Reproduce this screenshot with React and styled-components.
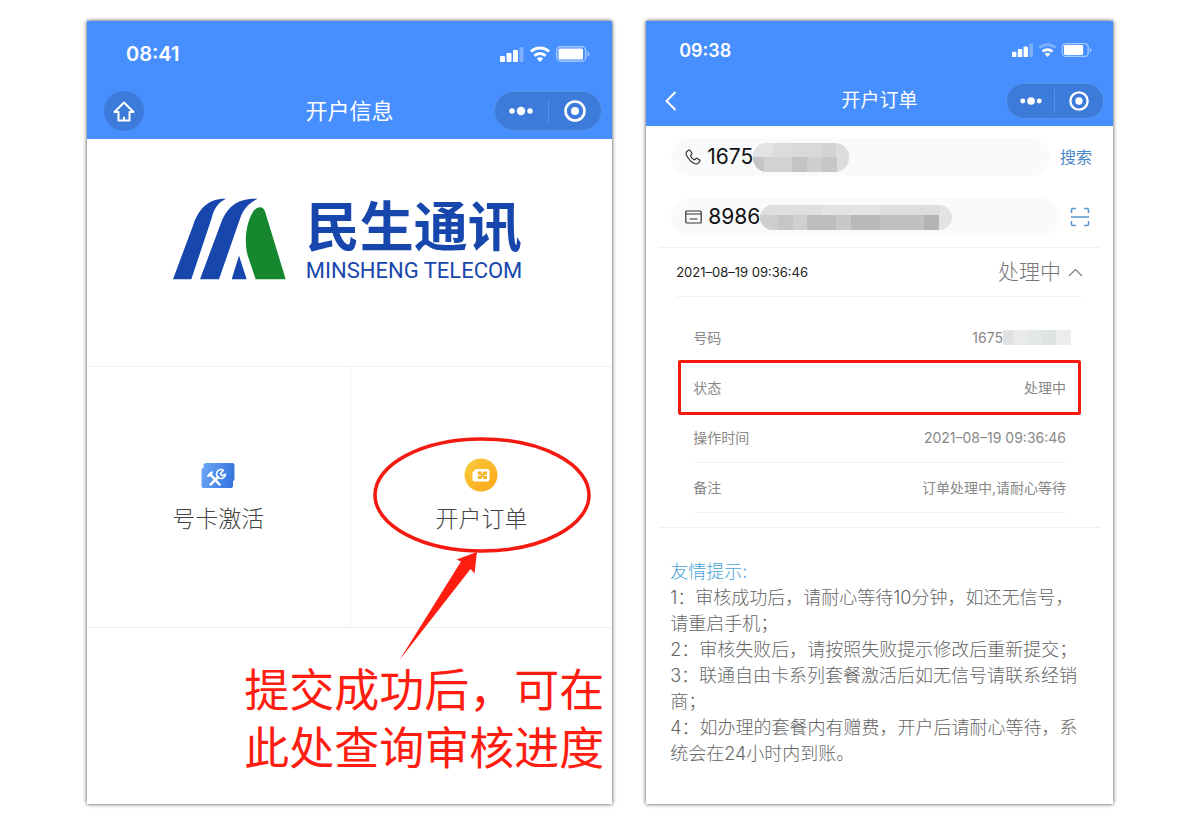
import React from "react";
import styled, { createGlobalStyle, css } from "styled-components";

const App = () => {
  return (
    <React.Fragment>
      <GlobalStyle />
      <Page>
        <Phone>
          <Header>
            <StatusBar time="08:41" fullWifi />
            <NavBar>
              <HomeButton type="button" aria-label="首页">
                <HomeIcon />
              </HomeButton>
              <Title $size="22px">开户信息</Title>
              <Capsule />
            </NavBar>
          </Header>
          <Brand>
            <BrandMark />
            <BrandText>
              <BrandName>民生通讯</BrandName>
              <BrandLatin>MINSHENG TELECOM</BrandLatin>
            </BrandText>
          </Brand>
          <Tiles>
            <Tile href="#activate">
              <ToolsIcon />
              <TileLabel>号卡激活</TileLabel>
            </Tile>
            <Tile href="#orders">
              <SimIcon />
              <TileLabel>开户订单</TileLabel>
              <Pointer />
            </Tile>
          </Tiles>
          <Note>
            提交成功后，可在
            <br />
            此处查询审核进度
          </Note>
        </Phone>

        <Phone>
          <Header $compact>
            <StatusBar time="09:38" compact />
            <NavBar $compact>
              <BackButton type="button" aria-label="返回">
                <BackIcon />
              </BackButton>
              <Title $size="19px">开户订单</Title>
              <Capsule compact />
            </NavBar>
          </Header>
          <Search>
            <SearchRow>
              <Field>
                <PhoneIcon />
                <Input type="text" aria-label="号码" defaultValue="1675" />
                <Mosaic blocks={PHONE_BLOCKS} width={96} height={29} round />
              </Field>
              <SearchButton type="button">搜索</SearchButton>
            </SearchRow>
            <SearchRow>
              <Field>
                <CardIcon />
                <Input type="text" aria-label="卡号" defaultValue="8986" $wide />
                <Mosaic blocks={CARD_BLOCKS} width={192} height={25} round />
              </Field>
              <ScanButton type="button" aria-label="扫码">
                <ScanIcon />
              </ScanButton>
            </SearchRow>
          </Search>
          <Order>
            <OrderHead type="button">
              <OrderTime>2021–08–19 09:36:46</OrderTime>
              <OrderStatus>
                处理中
                <UpIcon />
              </OrderStatus>
            </OrderHead>
            <Details>
              <Detail>
                <dt>号码</dt>
                <Masked>
                  1675
                  <Mosaic blocks={SMALL_BLOCKS} width={68} height={15} />
                </Masked>
              </Detail>
              <Detail $marked>
                <dt>状态</dt>
                <dd>处理中</dd>
              </Detail>
              <Detail>
                <dt>操作时间</dt>
                <dd>2021–08–19 09:36:46</dd>
              </Detail>
              <Detail>
                <dt>备注</dt>
                <dd>订单处理中,请耐心等待</dd>
              </Detail>
            </Details>
          </Order>
          <Tips>
            <TipsTitle>友情提示:</TipsTitle>
            {TIPS.map((tip) => (
              <Tip key={tip}>{tip}</Tip>
            ))}
          </Tips>
        </Phone>
      </Page>
    </React.Fragment>
  );
};

const TIPS = [
  "1：审核成功后，请耐心等待10分钟，如还无信号，请重启手机；",
  "2：审核失败后，请按照失败提示修改后重新提交；",
  "3：联通自由卡系列套餐激活后如无信号请联系经销商；",
  "4：如办理的套餐内有赠费，开户后请耐心等待，系统会在24小时内到账。",
];

// [x, y, width, height, color]
const PHONE_BLOCKS = [
  [0, 0, 96, 29, "#dcdcde"],
  [0, 0, 20, 14, "#e2e3e5"],
  [38, 0, 30, 14, "#d9d9db"],
  [68, 0, 15, 14, "#d4d4d6"],
  [0, 14, 11, 15, "#c5c5c7"],
  [11, 14, 28, 15, "#d2d2d4"],
  [39, 14, 15, 15, "#c4c4c6"],
  [54, 14, 15, 15, "#cfcfd1"],
  [69, 14, 15, 15, "#c6c6c8"],
];

const CARD_BLOCKS = [
  [0, 0, 192, 25, "#e3e3e5"],
  [0, 0, 62, 10, "#dfdfe1"],
  [120, 0, 60, 10, "#dddddf"],
  [0, 10, 18, 15, "#cfcfd1"],
  [18, 10, 15, 15, "#c6c6c8"],
  [33, 10, 14, 15, "#d0d0d2"],
  [47, 10, 29, 15, "#bebec0"],
  [76, 10, 15, 15, "#c8c8ca"],
  [91, 10, 29, 15, "#b9b9bb"],
  [120, 10, 44, 15, "#c1c1c3"],
  [164, 10, 15, 15, "#b4b4b6"],
];

const SMALL_BLOCKS = [
  [0, 0, 68, 15, "#ebeced"],
  [0, 0, 10, 15, "#e0e1e2"],
  [10, 0, 14, 15, "#e9eaeb"],
  [24, 0, 14, 15, "#e5e8e8"],
  [38, 0, 15, 15, "#dfe3e3"],
];

const Mosaic = ({ blocks, width, height, round }) => (
  <MosaicSvg width={width} height={height} $round={round} aria-hidden="true">
    {blocks.map(([x, y, w, h, color]) => (
      <rect key={`${x}-${y}-${w}`} x={x} y={y} width={w} height={h} fill={color} />
    ))}
  </MosaicSvg>
);

const StatusBar = ({ time, compact, fullWifi }) => (
  <Status $compact={compact}>
    <Time $compact={compact}>{time}</Time>
    <svg width={compact ? 80 : 90} height={compact ? 16 : 18} viewBox="0 0 90 18" fill="#fff" aria-hidden="true">
      <rect x="0" y="11" width="5" height="6" rx="1" />
      <rect x="6.500" y="8" width="5" height="9" rx="1" />
      <rect x="13" y="5" width="5" height="12" rx="1" />
      <rect x="19.500" y="2" width="4" height="15" rx="1" opacity=".3" />
      <g fill="none" stroke="#fff" strokeWidth="3">
        <path d="M31 6.500a13 13 0 0 1 18 0" opacity={fullWifi ? 1 : 0.3} />
        <path d="M34.500 10.800a8 8 0 0 1 11 0" />
      </g>
      <path d="M36.800 13.500a5 5 0 0 1 6.400 0L40 17z" />
      <rect x="56.700" y="1.700" width="29" height="14.600" rx="4" fill="none" stroke="#fff" strokeWidth="1.400" opacity=".5" />
      <rect x="58.500" y="3.500" width={fullWifi ? 24.500 : 21.500} height="11" rx="1.500" />
      <path d="M87.500 6.500c2.500 1 2.500 4 0 5z" opacity=".5" />
    </svg>
  </Status>
);

const Capsule = ({ compact }) => (
  <CapsuleBox $compact={compact}>
    <CapsuleButton type="button" aria-label="更多">
      <svg width={compact ? 22 : 24} height="10" viewBox="0 0 24 10" fill="#fff">
        <circle cx="3" cy="5" r="2.700" />
        <circle cx="12" cy="5" r="4.200" />
        <circle cx="21" cy="5" r="2.700" />
      </svg>
    </CapsuleButton>
    <CapsuleButton type="button" aria-label="关闭">
      <svg width={compact ? 20 : 22} height={compact ? 20 : 22} viewBox="0 0 22 22" fill="#fff">
        <circle cx="11" cy="11" r="9.500" fill="none" stroke="#fff" strokeWidth="2.600" />
        <circle cx="11" cy="11" r="4" />
      </svg>
    </CapsuleButton>
  </CapsuleBox>
);

const HomeIcon = () => (
  <svg width="22" height="21" viewBox="0 0 22 21" fill="none" stroke="#fff" strokeWidth="2" strokeLinejoin="round" strokeLinecap="round">
    <path d="M11 1.500 1.500 11h4v8.500h11V11h4z" />
    <path d="M11 16.500v2.500" />
  </svg>
);

const BackIcon = () => (
  <svg width="12" height="20" viewBox="0 0 12 20" fill="none" stroke="#fff" strokeWidth="2">
    <path d="M10.500 1 1.500 10l9 9" />
  </svg>
);

const PhoneIcon = () => (
  <svg width="16" height="16" viewBox="0 0 16 16" fill="none" stroke="#333" strokeWidth="1.200" strokeLinejoin="round">
    <path d="M3.600 1.200 1.900 2.500C.7 3.500 1 5.500 2.300 7.800c1.400 2.500 3.400 4.600 6 6.100 2 1.100 3.700 1.300 4.800.3l1.700-1.900c.4-.5.3-1-.2-1.400l-2.300-1.500c-.5-.3-1-.2-1.400.2l-.8.9c-.4.3-.8.3-1.300 0C7.500 9.700 6.500 8.600 5.700 7.300c-.3-.5-.2-.9.100-1.200l.8-.8c.4-.4.4-.8.2-1.300L5.100 1.500c-.4-.6-1-.7-1.500-.3z" />
  </svg>
);

const CardIcon = () => (
  <svg width="17" height="14" viewBox="0 0 17 14" fill="none" stroke="#333" strokeWidth="1.200">
    <rect x=".8" y="1" width="15.400" height="12" rx="1" />
    <path d="M1 4h15M4.500 9h8" />
  </svg>
);

const ScanIcon = () => (
  <svg width="20" height="20" viewBox="0 0 20 20" fill="none" stroke="#5a98d2" strokeWidth="1.600">
    <path d="M1.500 6V3a1.500 1.500 0 0 1 1.500-1.500H6M14 1.500h3a1.500 1.500 0 0 1 1.500 1.500V6M18.500 14v3a1.500 1.500 0 0 1-1.500 1.500H14M6 18.500H3a1.500 1.500 0 0 1-1.500-1.500V14M1 10h18" />
  </svg>
);

const UpIcon = () => (
  <svg width="15" height="9" viewBox="0 0 15 9" fill="none" stroke="#888" strokeWidth="1.400">
    <path d="M1 8l6.500-6.500L14 8" />
  </svg>
);

const BrandMark = () => (
  <svg width="113" height="82" viewBox="38 40 339 245" role="img" aria-label="民生通讯">
    <g fill="#1746ad">
      <path d="M38 283 97 125C115 70 145 41 197 42 171 54 160 75 153 103L93 283z" />
      <path d="M119 283 180 120C199 66 232 39 292 42 262 56 247 76 238 105L176 283z" />
      <path d="M214 283 236 212l23 71z" />
    </g>
    <path fill="#16872f" d="M286 283 262 212C251 168 257 120 275 86 283 72 291 66 301 67c9 2 12 8 15 19l60 197z" />
  </svg>
);

const ToolsIcon = () => (
  <svg width="34" height="34" viewBox="0 0 34 34" fill="none" aria-hidden="true">
    <defs>
      <linearGradient id="blue" x1="0" y1="0.300" x2="1" y2="0.500">
        <stop offset="0" stopColor="#6aa5f5" />
        <stop offset="1" stopColor="#3474de" />
      </linearGradient>
    </defs>
    <path d="M5.500 5H31.500a2 2 0 0 1 2 2V21a2 2 0 0 1-1.500 2v5a2 2 0 0 1-2 2H2.500a2 2 0 0 1-2-2V12a2 2 0 0 1 2-2V7a3 2 0 0 1 3-2z" fill="url(#blue)" />
    <path d="M7.300 17.800l3.400-3.400" stroke="#fff" strokeWidth="2.400" strokeLinecap="round" />
    <path d="M9.300 16.300l9.200 10.200M9.500 26.500l7.800-7.500" stroke="#fff" strokeWidth="2.500" strokeLinecap="round" />
    <path d="M22.500 12.300a4.500 4.500 0 1 0 2 4l-3.200 1.500-2-2z" stroke="#fff" strokeWidth="1.600" strokeLinejoin="round" />
  </svg>
);

const SimIcon = () => (
  <svg width="34" height="34" viewBox="0 0 34 34" aria-hidden="true">
    <defs>
      <linearGradient id="gold" x1="0" y1="0" x2="1" y2="1">
        <stop offset="0" stopColor="#f9cd3e" />
        <stop offset="1" stopColor="#fda417" />
      </linearGradient>
    </defs>
    <circle cx="17" cy="17" r="16.500" fill="url(#gold)" />
    <path d="M12 11H23.500a2 2 0 0 1 2 2v8.500a2 2 0 0 1-2 2H10.500a2 2 0 0 1-2-2V14.500z" fill="#fff" />
    <g fill="#f5b52a">
      <rect x="13.800" y="13.500" width="4" height="3.200" rx=".6" />
      <rect x="19" y="13.500" width="4" height="3.200" rx=".6" />
      <rect x="13.800" y="17.800" width="4" height="3.200" rx=".6" />
      <rect x="19" y="17.800" width="4" height="3.200" rx=".6" />
      <rect x="17" y="15.500" width="3" height="3.500" />
    </g>
  </svg>
);

const Pointer = () => (
  <PointerSvg width="222" height="228" viewBox="370 435 222 228" aria-hidden="true">
    <ellipse cx="482" cy="495" rx="107" ry="56" fill="none" stroke="#f51a10" strokeWidth="3.500" />
    <path d="M399.500 660 461 561.500l-4.500-2L477 552l-2.500 21.500-4-4.500z" fill="#ff1c10" />
  </PointerSvg>
);

const GlobalStyle = createGlobalStyle`
  * {
    box-sizing: border-box;
  }
  body {
    margin: 0;
    background: #fff;
    font-family: Inter, "Noto Sans CJK SC", sans-serif;
  }
  button {
    padding: 0;
    border: 0;
    background: none;
    font: inherit;
    color: inherit;
    cursor: pointer;
  }
  svg {
    display: block;
    flex: none;
  }
`;

const Page = styled.main`
  min-height: 100vh;
  padding: 21px 87px;
  display: grid;
  grid-template-columns: 9fr 8fr;
  gap: 34px;
`;

const Phone = styled.section`
  min-width: 0;
  background: #fff;
  box-shadow: 0 0 4px rgba(0, 0, 0, 0.75);
`;

const Header = styled.header`
  padding: ${(props) => (props.$compact ? "17px 9px 7px" : "20px 10px 8px")};
  background: #478fff;
  color: #fff;
`;

const Status = styled.div`
  height: ${(props) => (props.$compact ? "24px" : "26px")};
  padding: ${(props) => (props.$compact ? "0 12px 0 24px" : "0 12px 0 29px")};
  display: flex;
  align-items: center;
  justify-content: space-between;
`;

const Time = styled.span`
  font-size: ${(props) => (props.$compact ? "18px" : "20px")};
  font-weight: 600;
`;

const NavBar = styled.div`
  margin-top: ${(props) => (props.$compact ? "21px" : "24px")};
  display: grid;
  grid-template-columns: 1fr auto 1fr;
  align-items: center;
`;

const Title = styled.h1`
  margin: 0;
  font-size: ${(props) => props.$size};
  line-height: 32px;
  font-weight: 400;
`;

const HomeButton = styled.button`
  width: 40px;
  height: 40px;
  margin-left: 7px;
  border-radius: 50%;
  display: flex;
  align-items: center;
  justify-content: center;
  && {
    background: #3d7bdb;
  }
`;

const BackButton = styled.button`
  width: 20px;
  height: 32px;
  margin-left: 10px;
  display: flex;
  align-items: center;
`;

const CapsuleBox = styled.div`
  width: ${(props) => (props.$compact ? "98px" : "108px")};
  height: ${(props) => (props.$compact ? "36px" : "40px")};
  border: 1px solid #5593ee;
  border-radius: 20px;
  background: #3d7bdb;
  display: flex;
  align-items: center;
  justify-self: end;
`;

const CapsuleButton = styled.button`
  flex: 1;
  height: 24px;
  display: flex;
  align-items: center;
  justify-content: center;
  & + & {
    border-left: 1px solid #5590e6;
  }
`;

const Brand = styled.div`
  height: 227px;
  padding-right: 4px;
  padding-bottom: 28px;
  display: flex;
  align-items: center;
  justify-content: center;
  gap: 20px;
`;

const BrandText = styled.div`
  padding-top: 9px;
  color: #1746ad;
`;

const BrandName = styled.div`
  font-family: "Liberation Sans", "Noto Sans CJK SC", sans-serif;
  font-size: 54px;
  line-height: 56px;
  font-weight: 700;
`;

const BrandLatin = styled.div`
  font-family: Roboto, "Liberation Sans", sans-serif;
  font-size: 22px;
  line-height: 30px;
  white-space: nowrap;
`;

const Tiles = styled.nav`
  display: grid;
  grid-template-columns: 1fr 1fr;
  border-top: 1px solid #eef0f2;
  border-bottom: 1px solid #eaf0f2;
`;

const Tile = styled.a`
  position: relative;
  height: 260px;
  padding-top: 91px;
  display: flex;
  flex-direction: column;
  align-items: center;
  gap: 10px;
  color: #444;
  text-decoration: none;
  & + & {
    border-left: 1px solid #f0f3f4;
  }
`;

const TileLabel = styled.span`
  font-size: 23px;
  line-height: 34px;
  font-weight: 300;
`;

const PointerSvg = styled.svg`
  position: absolute;
  z-index: 1;
  top: 68px;
  left: 50%;
  transform: translateX(-50%);
`;

const Note = styled.p`
  margin: 0;
  padding: 35px 8px 24px;
  color: #ff1c10;
  font-family: "Liberation Sans", "Noto Sans CJK SC", sans-serif;
  font-size: 45px;
  line-height: 58px;
  text-align: right;
`;

const Search = styled.div`
  margin: 0 13px;
  padding: 12px 8px 11px 12px;
  border-bottom: 1px solid #eef2f4;
  display: grid;
  gap: 22px;
`;

const SearchRow = styled.div`
  display: flex;
  align-items: center;
`;

const Field = styled.label`
  flex: 1;
  height: 38px;
  padding-left: 14px;
  border-radius: 20px;
  background: #f9fafc;
  display: flex;
  align-items: center;
`;

const Input = styled.input`
  width: ${(props) => (props.$wide ? "52px" : "46px")};
  margin-left: 6px;
  padding: 0;
  border: 0;
  outline: 0;
  background: none;
  color: #111;
  font-family: inherit;
  font-size: 21px;
  line-height: 28px;
`;

const MosaicSvg = styled.svg`
  border-radius: ${(props) => (props.$round ? "14px" : "0")};
`;

const SearchButton = styled.button`
  margin-left: 10px;
  && {
    padding-bottom: 2px;
    color: #4a86c5;
    font-size: 16px;
  }
`;

const ScanButton = styled.button`
  margin: 0 2px 0 10px;
`;

const Order = styled.section`
  margin: 0 13px;
  padding: 0 17px 14px;
  border-bottom: 1px solid #eaf2f4;
`;

const OrderHead = styled.button`
  width: 100%;
  height: 49px;
  display: flex;
  align-items: center;
  justify-content: space-between;
  && {
    border-bottom: 1px solid #f3f3f3;
  }
`;

const OrderTime = styled.span`
  color: #222;
  font-size: 13px;
`;

const OrderStatus = styled.span`
  display: flex;
  align-items: center;
  gap: 7px;
  color: #777;
  font-size: 21px;
  line-height: 30px;
  font-weight: 300;
`;

const Details = styled.dl`
  margin: 16px 0 0;
`;

const Detail = styled.div`
  position: relative;
  height: 50px;
  margin: 0 17px;
  border-bottom: 1px solid #f3f3f3;
  display: flex;
  align-items: center;
  justify-content: space-between;
  color: #888;
  font-size: 14px;
  line-height: 20px;
  dd {
    margin: 0;
  }
  ${(props) =>
    props.$marked &&
    css`
      &::after {
        content: "";
        position: absolute;
        inset: -3px -15px;
        border: 3px solid #f51a10;
        border-radius: 2px;
      }
    `}
`;

const Masked = styled.dd`
  display: flex;
  align-items: center;
  && {
    margin-right: -5px;
  }
`;

const Tips = styled.section`
  padding: 31px 24px 20px;
  color: #666;
  font-size: 18px;
  line-height: 26px;
  font-weight: 300;
`;

const TipsTitle = styled.h2`
  margin: 0;
  color: #4ba3d6;
  font-size: 18px;
  font-weight: 300;
`;

const Tip = styled.p`
  margin: 0;
`;

export default App;
